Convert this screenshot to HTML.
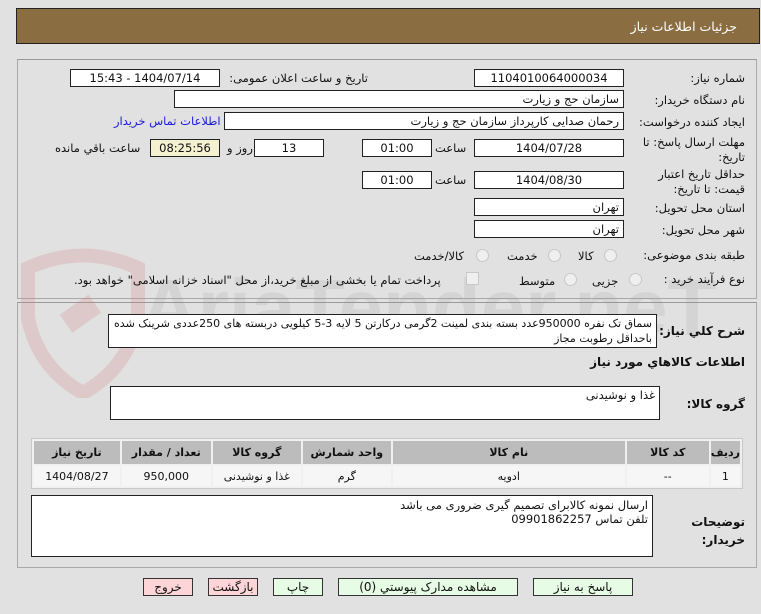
<!DOCTYPE html>
<html><head><meta charset="utf-8">
<style>
*{box-sizing:border-box;margin:0;padding:0}
body{width:761px;height:614px;background:#e1e1e1;position:relative;overflow:hidden;font-family:"DejaVu Sans","Liberation Sans",sans-serif;font-size:11.5px;color:#111;direction:rtl}
.a{position:absolute;white-space:nowrap}
.hdr{left:16px;top:8px;width:744px;height:36px;background:#8b6d42;border:1px solid #222}
.hdr span{position:absolute;right:22px;top:10px;color:#fff;font-size:12.5px}
.pan{position:absolute;border:1px solid #a9a9a9;border-top-color:#999}
.box{position:absolute;background:#fff;border:1px solid #222;height:18px;line-height:16px;padding:0 4px;text-align:right}
.c{text-align:center}
.lbl{position:absolute;white-space:nowrap;text-align:right}
.rad{position:absolute;width:13px;height:13px;border-radius:50%;border:1px solid #c8c8c8;background:#efefef}
.btn{position:absolute;top:578px;height:18px;border:1px solid #333;line-height:16px;text-align:center;font-size:12px}
.g{background:#e6fce4}.p{background:#fdd5d8}
table{position:absolute;left:31px;top:438px;width:712px;border-collapse:separate;border-spacing:2px;background:#f0f0f0;border:1px solid #c8c8c8}
th{background:#bcbcbc;height:23px;font-size:11px;font-weight:bold}
td{background:#f6f6f6;height:20px;text-align:center;font-size:11px}
.wm{position:absolute;color:rgba(150,150,150,0.16);font-weight:bold;font-size:80px;font-family:"Liberation Sans",sans-serif;direction:ltr}
</style></head><body>
<div class="a hdr"><span>جزئیات اطلاعات نیاز</span></div>

<div class="pan" style="left:17px;top:59px;width:740px;height:240px"></div>
<div class="pan" style="left:17px;top:302px;width:740px;height:266px"></div>

<svg class="a" style="left:18px;top:248px" width="130" height="150" viewBox="0 0 130 150"><path d="M10 20 Q65 -5 120 20 L120 70 Q110 120 65 145 Q20 120 10 70 Z" fill="none" stroke="rgba(210,130,130,0.25)" stroke-width="14"/><rect x="45" y="55" width="35" height="22" fill="rgba(210,130,130,0.25)" transform="rotate(-35 62 66)"/></svg>
<div class="wm" style="left:140px;top:262px">AriaTender.neT</div>

<div class="lbl" style="right:16px;top:71px">شماره نیاز:</div>
<div class="box c" style="left:474px;top:69px;width:150px">1104010064000034</div>
<div class="lbl" style="right:393px;top:71px">تاریخ و ساعت اعلان عمومی:</div>
<div class="box c" style="left:70px;top:69px;width:150px">1404/07/14 - 15:43</div>

<div class="lbl" style="right:16px;top:93px">نام دستگاه خریدار:</div>
<div class="box" style="left:174px;top:90px;width:450px">سازمان حج و زیارت</div>

<div class="lbl" style="right:16px;top:115px">ایجاد کننده درخواست:</div>
<div class="box" style="left:224px;top:112px;width:400px">رحمان  صدایی کارپرداز سازمان حج و زیارت</div>
<div class="lbl" style="left:114px;top:114px;color:#1a1adb">اطلاعات تماس خریدار</div>

<div class="lbl" style="right:16px;top:135px;line-height:15px">مهلت ارسال پاسخ: تا<br>تاریخ:</div>
<div class="box c" style="left:474px;top:139px;width:150px">1404/07/28</div>
<div class="lbl" style="left:435px;top:141px">ساعت</div>
<div class="box c" style="left:362px;top:139px;width:70px">01:00</div>
<div class="box c" style="left:254px;top:139px;width:70px">13</div>
<div class="lbl" style="left:227px;top:141px">روز و</div>
<div class="box c" style="left:150px;top:139px;width:70px;background:#f3f1d0">08:25:56</div>
<div class="lbl" style="left:55px;top:141px">ساعت باقي مانده</div>

<div class="lbl" style="right:16px;top:167px;line-height:15px">حداقل تاریخ اعتبار<br>قیمت: تا تاریخ:</div>
<div class="box c" style="left:474px;top:171px;width:150px">1404/08/30</div>
<div class="lbl" style="left:435px;top:173px">ساعت</div>
<div class="box c" style="left:362px;top:171px;width:70px">01:00</div>

<div class="lbl" style="right:16px;top:201px">استان محل تحویل:</div>
<div class="box" style="left:474px;top:198px;width:150px">تهران</div>
<div class="lbl" style="right:16px;top:223px">شهر محل تحویل:</div>
<div class="box" style="left:474px;top:220px;width:150px">تهران</div>

<div class="lbl" style="right:16px;top:248px">طبقه بندی موضوعی:</div>
<div class="rad" style="left:604px;top:249px"></div><div class="lbl" style="left:578px;top:249px">کالا</div>
<div class="rad" style="left:548px;top:249px"></div><div class="lbl" style="left:507px;top:249px">خدمت</div>
<div class="rad" style="left:476px;top:249px"></div><div class="lbl" style="left:414px;top:249px">کالا/خدمت</div>

<div class="lbl" style="right:16px;top:272px">نوع فرآیند خرید :</div>
<div class="rad" style="left:629px;top:273px"></div><div class="lbl" style="left:592px;top:274px">جزیی</div>
<div class="rad" style="left:564px;top:273px"></div><div class="lbl" style="left:519px;top:274px">متوسط</div>
<div class="a" style="left:466px;top:272px;width:13px;height:13px;border:1px solid #c8c8c8;background:#efefef"></div>
<div class="lbl" style="left:74px;top:273px">پرداخت تمام یا بخشی از مبلغ خرید،از محل "اسناد خزانه اسلامی" خواهد بود.</div>

<div class="lbl" style="right:16px;top:324px;font-weight:bold;font-size:12px">شرح کلي نياز:</div>
<div class="box" style="left:108px;top:314px;width:549px;height:34px;line-height:15px;padding-top:1px;white-space:normal;font-size:11px;letter-spacing:-0.2px">سماق تک نفره  950000عدد بسته بندی لمینت 2گرمی درکارتن 5 لایه 3-5 کیلویی دربسته های 250عددی شرینک شده باحداقل رطوبت مجاز</div>
<div class="lbl" style="right:16px;top:355px;font-weight:bold;font-size:12px">اطلاعات کالاهاي مورد نياز</div>

<div class="lbl" style="right:16px;top:397px;font-weight:bold;font-size:12px">گروه کالا:</div>
<div class="box" style="left:110px;top:386px;width:550px;height:34px">غذا و نوشیدنی</div>

<table>
<tr><th style="width:26px">رديف</th><th style="width:82px">کد کالا</th><th style="width:232px">نام کالا</th><th style="width:88px">واحد شمارش</th><th style="width:88px">گروه کالا</th><th style="width:89px">تعداد / مقدار</th><th>تاريخ نياز</th></tr>
<tr><td>1</td><td>--</td><td>ادویه</td><td>گرم</td><td>غذا و نوشیدنی</td><td>950,000</td><td>1404/08/27</td></tr>
</table>

<div class="lbl" style="right:16px;top:513px;font-weight:bold;font-size:12px;line-height:18px">توضيحات<br>خريدار:</div>
<div class="box" style="left:31px;top:495px;width:622px;height:62px;line-height:14px;padding-top:2px">ارسال نمونه کالابرای تصمیم گیری ضروری می باشد<br>تلفن تماس 09901862257</div>

<div class="btn g" style="left:533px;width:100px">پاسخ به نياز</div>
<div class="btn g" style="left:338px;width:180px">مشاهده مدارک پيوستي (0)</div>
<div class="btn g" style="left:273px;width:50px">چاپ</div>
<div class="btn p" style="left:208px;width:50px">بازگشت</div>
<div class="btn p" style="left:143px;width:50px">خروج</div>
</body></html>
